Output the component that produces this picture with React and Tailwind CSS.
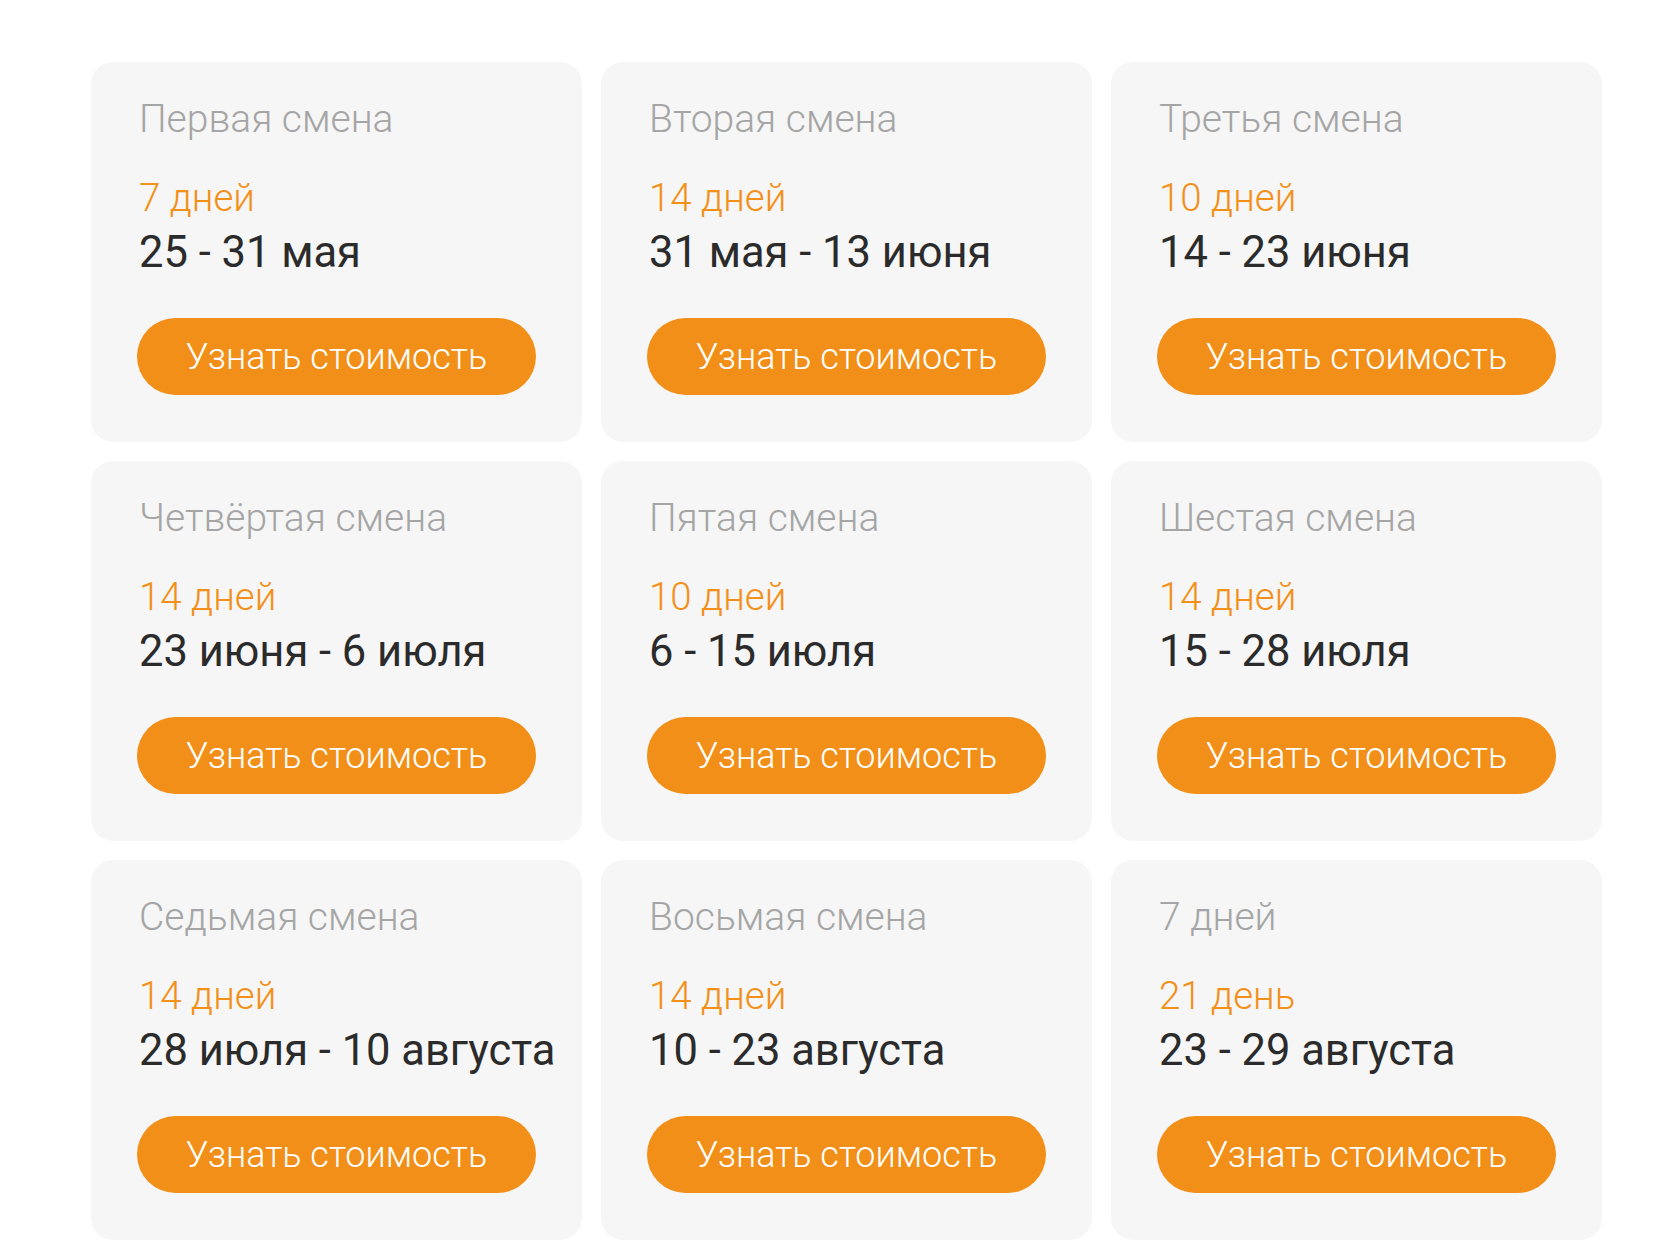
const shifts = [
  { title: 'Первая смена', days: '7 дней', dates: '25 - 31 мая' },
  { title: 'Вторая смена', days: '14 дней', dates: '31 мая - 13 июня' },
  { title: 'Третья смена', days: '10 дней', dates: '14 - 23 июня' },
  { title: 'Четвёртая смена', days: '14 дней', dates: '23 июня - 6 июля' },
  { title: 'Пятая смена', days: '10 дней', dates: '6 - 15 июля' },
  { title: 'Шестая смена', days: '14 дней', dates: '15 - 28 июля' },
  { title: 'Седьмая смена', days: '14 дней', dates: '28 июля - 10 августа' },
  { title: 'Восьмая смена', days: '14 дней', dates: '10 - 23 августа' },
  { title: '7 дней', days: '21 день', dates: '23 - 29 августа' },
];

function ShiftCard({ shift }) {
  return (
    <div className="rounded-[22px] bg-[#f6f6f6] px-[46px] pt-[33px] pb-[47px]">
      <p className="text-[39px] leading-[48px] font-light text-[#a5a5a5] pl-[2px]">{shift.title}</p>
      <p className="mt-[31px] text-[38.5px] leading-[48px] font-light text-[#f39019] pl-[2px]">{shift.days}</p>
      <p className="mt-[4px] text-[43.5px] leading-[54px] text-[#2b2b2b] pl-[2px] whitespace-nowrap">{shift.dates}</p>
      <button className="mt-[38px] flex h-[77px] w-full items-center justify-center rounded-full bg-[#f28f18] text-[36px] font-light text-white">
        Узнать стоимость
      </button>
    </div>
  );
}

export default function App() {
  return (
    <div className="min-h-[1242px] bg-white pl-[91px] pt-[62px]" style={{ fontFamily: 'Roboto, "Noto Sans", sans-serif' }}>
      <div className="grid grid-cols-[repeat(3,491px)] gap-x-[19px] gap-y-[19px]">
        {shifts.map((s) => (
          <ShiftCard key={s.title + s.dates} shift={s} />
        ))}
      </div>
    </div>
  );
}
